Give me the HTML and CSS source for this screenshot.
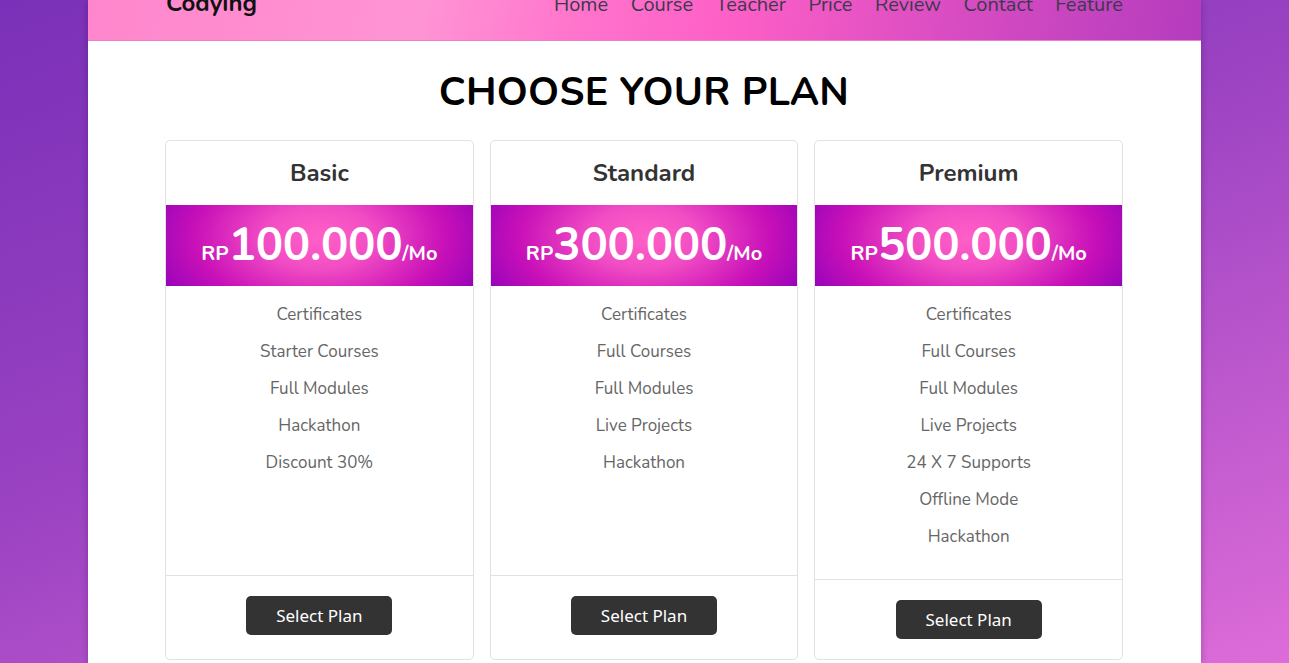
FILE: index.html
```html
<!DOCTYPE html>
<html lang="en">
<head>
<meta charset="utf-8">
<title>Codying - Price</title>
<link rel="stylesheet" href="styles.css">
</head>
<body>
<div class="page">
  <header class="topbar">
    <div class="topbar-inner">
      <div class="logo">Codying</div>
      <nav class="nav">
        <a href="#">Home</a>
        <a href="#">Course</a>
        <a href="#">Teacher</a>
        <a href="#">Price</a>
        <a href="#">Review</a>
        <a href="#">Contact</a>
        <a href="#">Feature</a>
      </nav>
    </div>
  </header>

  <section class="pricing">
    <h1 class="title">CHOOSE YOUR PLAN</h1>
    <div class="cards">
      <div class="card">
        <div class="card-head">Basic</div>
        <div class="price"><span class="cur">RP</span><span class="amount">100.000</span><span class="per">/Mo</span></div>
        <ul class="features">
          <li>Certificates</li>
          <li>Starter Courses</li>
          <li>Full Modules</li>
          <li>Hackathon</li>
          <li>Discount 30%</li>
        </ul>
        <div class="card-foot card-foot--tall"><button class="btn">Select Plan</button></div>
      </div>
      <div class="card">
        <div class="card-head">Standard</div>
        <div class="price"><span class="cur">RP</span><span class="amount">300.000</span><span class="per">/Mo</span></div>
        <ul class="features">
          <li>Certificates</li>
          <li>Full Courses</li>
          <li>Full Modules</li>
          <li>Live Projects</li>
          <li>Hackathon</li>
        </ul>
        <div class="card-foot card-foot--tall"><button class="btn">Select Plan</button></div>
      </div>
      <div class="card">
        <div class="card-head">Premium</div>
        <div class="price"><span class="cur">RP</span><span class="amount">500.000</span><span class="per">/Mo</span></div>
        <ul class="features">
          <li>Certificates</li>
          <li>Full Courses</li>
          <li>Full Modules</li>
          <li>Live Projects</li>
          <li>24 X 7 Supports</li>
          <li>Offline Mode</li>
          <li>Hackathon</li>
        </ul>
        <div class="card-foot"><button class="btn">Select Plan</button></div>
      </div>
    </div>
  </section>
</div>
</body>
</html>
```

FILE: styles.css
```css
html, body {
  margin: 0;
  padding: 0;
}
body {
  min-height: 663px;
  background: linear-gradient(160deg, #7a30b8 0%, #9a42c2 45%, #dd6cd8 100%);
  font-family: "Nunito", Lato, "Noto Sans", sans-serif;
  overflow: hidden;
}
.page {
  width: 1113px;
  min-height: 663px;
  margin: 0 auto;
  background: #fff;
  box-shadow: 0 0 7px rgba(40, 0, 60, 0.3);
}
.topbar {
  height: 40px;
  background: linear-gradient(100deg, #ff86cc 0%, #ff94d4 30%, #ff72cc 45%, #fd5fc6 58%, #d84cc2 78%, #b43cbe 100%);
  border-bottom: 1px solid #e87fc8;
  overflow: hidden;
}
.topbar-inner {
  margin-top: -13px;
  padding: 0 78px 0 77px;
  display: flex;
  justify-content: space-between;
  align-items: baseline;
}
.logo {
  font-weight: 700;
  font-size: 24px;
  color: #111;
  padding-left: 1px;
}
.nav {
  display: flex;
  gap: 22.6px;
}
.nav a {
  font-size: 20px;
  color: #3a3a4a;
  text-decoration: none;
}
.pricing {
  padding: 0 78px 0 77px;
}
.title {
  margin: 24px 0 21px;
  text-align: center;
  font-size: 39.5px;
  font-weight: 700;
  letter-spacing: 0.3px;
  color: #000;
  line-height: 54px;
}
.cards {
  display: flex;
  gap: 16px;
}
.card {
  flex: 1;
  display: flex;
  flex-direction: column;
  border: 1px solid #e2e2e2;
  border-radius: 5px;
  overflow: hidden;
}
.card-head {
  height: 64px;
  display: flex;
  align-items: center;
  justify-content: center;
  font-size: 24px;
  font-weight: 700;
  color: #333;
}
.price {
  height: 81px;
  display: flex;
  align-items: baseline;
  justify-content: center;
  line-height: 81px;
  color: #fff;
  font-weight: 700;
  background: radial-gradient(ellipse 62% 135% at 50% 40%, #ff60c6 0%, #f24ec4 28%, #c810b8 66%, #8a00ba 100%);
}
.cur {
  font-size: 20.5px;
}
.amount {
  font-size: 45.7px;
  letter-spacing: -0.3px;
}
.per {
  font-size: 20px;
}
.features {
  list-style: none;
  margin: 0;
  padding: 10px 0 24px;
  flex: 1;
}
.features li {
  text-align: center;
  font-size: 17px;
  line-height: 37px;
  color: #666;
}
.card-foot {
  border-top: 1px solid #e2e2e2;
  padding: 20px 0 20px;
  display: flex;
  justify-content: center;
}
.card-foot--tall {
  padding-bottom: 24px;
}
.btn {
  width: 146px;
  height: 39px;
  border: 0;
  border-radius: 5px;
  background: #333;
  color: #fff;
  font-family: "Noto Sans", "Open Sans", sans-serif;
  font-size: 17px;
}
```
